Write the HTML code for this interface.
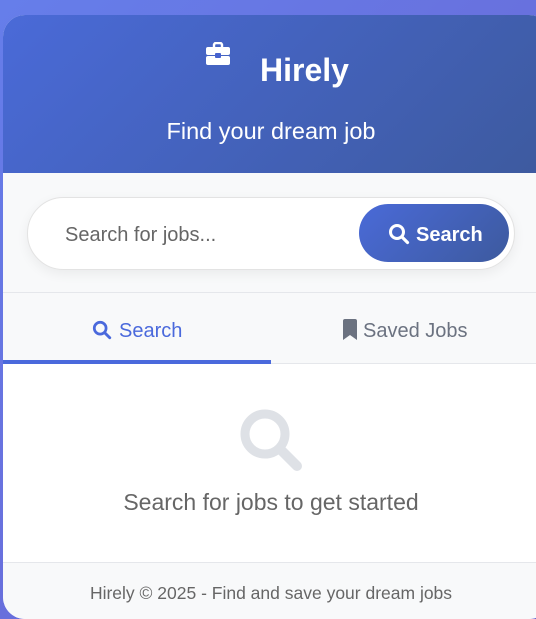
<!DOCTYPE html>
<html><head><style>
*{margin:0;padding:0;box-sizing:border-box}
html,body{width:536px;height:619px;overflow:hidden}
body{background:linear-gradient(135deg,#667eea,#6a62d0);font-family:"Liberation Sans",sans-serif;position:relative}
.card{position:absolute;left:3px;top:15px;width:548px;height:604px;background:#fff;border-radius:22px;overflow:hidden}
.hdr{height:158px;background:linear-gradient(135deg,#4a6ad8,#3d5a9e);color:#fff;position:relative}
.hdr h1{position:absolute;left:257px;top:37px;font-size:32px;font-weight:bold}
.hdr p{position:absolute;left:0;width:536px;text-align:center;top:103px;font-size:23.5px}
.sa{height:120px;background:#f8f9fa;position:relative;border-bottom:1px solid #e5e7eb}
.box{position:absolute;left:24px;top:24px;width:488px;height:73px;background:#fff;border-radius:37px;border:1px solid #e3e3e3;box-shadow:0 4px 12px rgba(0,0,0,.06)}
.box span{position:absolute;left:37px;top:26px;font-size:20px;color:#666}
.btn{position:absolute;left:331px;top:6px;width:150px;height:58px;border-radius:29px;background:linear-gradient(135deg,#4a6ad8,#3d5a9e);color:#fff;font-size:20px;font-weight:bold}
.btn svg{position:absolute;left:29px;top:19px}
.btn b{position:absolute;left:57px;top:20px}
.tabs{height:71px;background:#f8f9fa;position:relative;border-bottom:1px solid #e5e7eb}
.t1{position:absolute;left:0;top:0;width:268px;height:71px;border-bottom:4px solid #4a69dc;color:#4a69dc}
.t1 svg{position:absolute;left:89px;top:27px}.t1 span{position:absolute;left:116px;top:27px;font-size:20px}
.t2{position:absolute;left:268px;top:0;width:268px;height:71px;color:#6b7280}
.t2 svg{position:absolute;left:71px;top:26px}.t2 span{position:absolute;left:92px;top:27px;font-size:20px}
.ct{height:198px;position:relative}
.ct p{position:absolute;left:0;width:536px;text-align:center;top:125px;font-size:23px;color:#666}
.ft{height:60px;background:#f8f9fa;border-top:1px solid #e5e7eb;text-align:center;width:536px;font-size:17.5px;color:#666;padding-top:20px}
</style></head><body>
<div class="card">
<div class="hdr">
<svg style="position:absolute;left:202px;top:27px" width="26" height="24" viewBox="0 0 26 24"><path d="M9 5V3a2 2 0 0 1 2-2h4a2 2 0 0 1 2 2v2" fill="none" stroke="#fff" stroke-width="2.4"/><rect x="1" y="5" width="24" height="8" rx="2" fill="#fff"/><rect x="1" y="14" width="24" height="9" rx="2" fill="#fff"/><rect x="10" y="11" width="6" height="5" rx="1" fill="#4763cf"/></svg>
<h1>Hirely</h1>
<p>Find your dream job</p>
</div>
<div class="sa"><div class="box"><span>Search for jobs...</span>
<div class="btn"><svg width="22" height="22" viewBox="0 0 22 22"><circle cx="9" cy="9" r="6.5" fill="none" stroke="#fff" stroke-width="3"/><path d="M14 14l5.5 5.5" stroke="#fff" stroke-width="3.2" stroke-linecap="round"/></svg><b>Search</b></div></div></div>
<div class="tabs">
<div class="t1"><svg width="20" height="20" viewBox="0 0 22 22"><circle cx="9" cy="9" r="6.5" fill="none" stroke="#4a69dc" stroke-width="3"/><path d="M14 14l5.5 5.5" stroke="#4a69dc" stroke-width="3.2" stroke-linecap="round"/></svg><span>Search</span></div>
<div class="t2"><svg width="16" height="21" viewBox="0 0 16 21"><path d="M1 2a2 2 0 0 1 2-2h10a2 2 0 0 1 2 2v19l-7-5-7 5z" fill="#6b7280"/></svg><span>Saved Jobs</span></div>
</div>
<div class="ct">
<svg style="position:absolute;left:236px;top:44px" width="64" height="64" viewBox="0 0 64 64"><circle cx="26" cy="26" r="20" fill="none" stroke="#dee1e6" stroke-width="9"/><path d="M41 41l17 17" stroke="#dee1e6" stroke-width="10" stroke-linecap="round"/></svg>
<p>Search for jobs to get started</p>
</div>
<div class="ft">Hirely © 2025 - Find and save your dream jobs</div>
</div>
</body></html>
